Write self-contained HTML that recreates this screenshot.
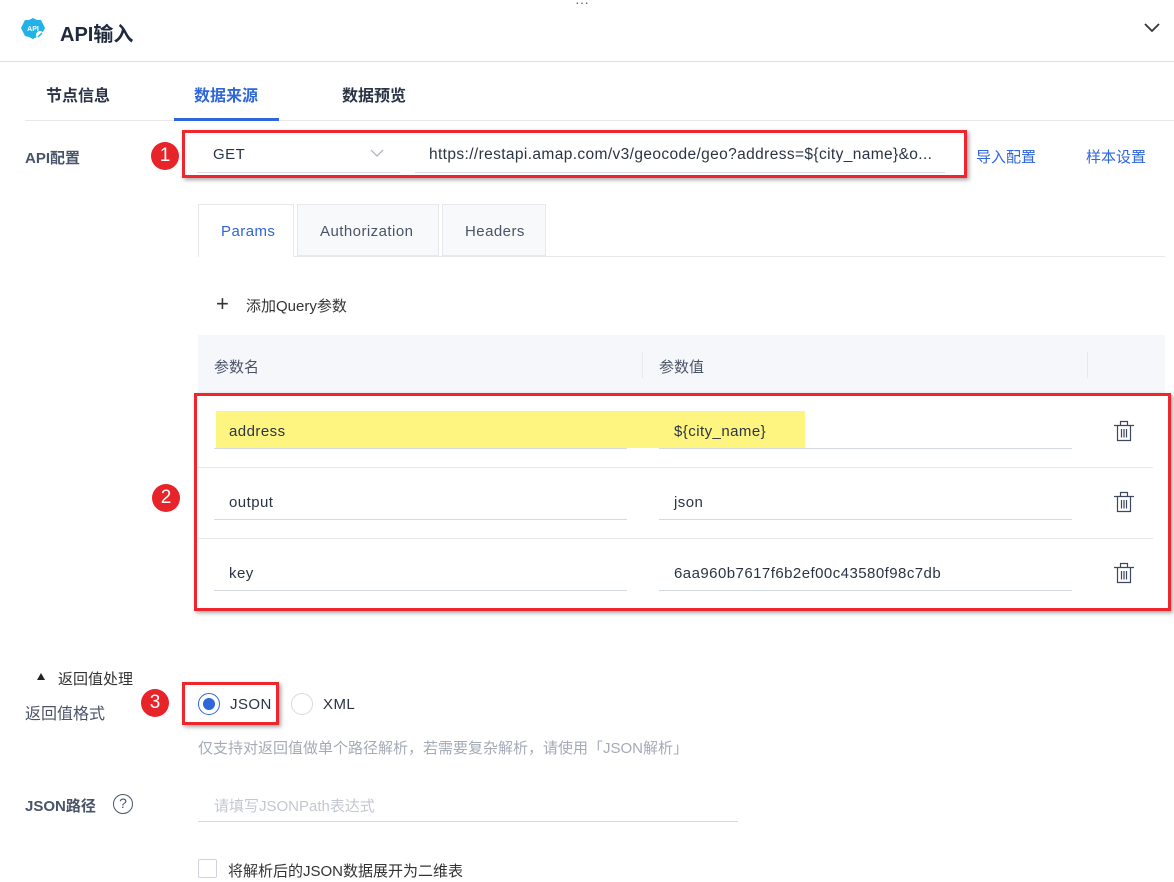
<!DOCTYPE html>
<html><head><meta charset="utf-8"><style>
*{box-sizing:border-box;margin:0;padding:0}
body{width:1174px;height:882px;background:#fff;font-family:"Liberation Sans","Noto Sans CJK SC",sans-serif;color:#2b3445;position:relative;overflow:hidden;font-size:14px}
.a{position:absolute;white-space:nowrap}
.badge{position:absolute;width:28px;height:28px;border-radius:50%;background:#e8242b;color:#fff;font-size:19px;text-align:center;line-height:28px}
.red{position:absolute;border:3px solid #f0262e;box-shadow:2px 2px 4px rgba(0,0,0,.35)}
.ul{position:absolute;border-bottom:1px solid #d5d9e0}
.lbl{font-weight:bold;color:#4a5468;font-size:15px}
.blue{color:#2f66d9}
.trash{position:absolute;width:22px;height:22px}
.ls{letter-spacing:.45px}
</style></head><body>
<div class="a" style="left:575px;top:-6px;color:#666;font-size:14px">···</div>
<svg class="a" style="left:21px;top:17px" width="25" height="24" viewBox="0 0 25 24"><path d="M12 1l4 2 4 0 2 4 2 4-2 4-2 4-4 1-4 2-4-2-4-1-2-4-2-4 2-4 2-4 4 0z" fill="#22b1e8"/><text x="12" y="14" font-size="7" font-weight="bold" fill="#fff" text-anchor="middle" font-family="Liberation Sans">API</text><circle cx="19" cy="18" r="4" fill="#fff"/><path d="M17 20l4-4" stroke="#22b1e8" stroke-width="1.5"/></svg>
<div class="a" style="left:60px;top:18px;font-size:20px;font-weight:bold;color:#1f2a3c">API输入</div>
<svg class="a" style="left:1144px;top:22px" width="16" height="12"><path d="M1 2l7 7 7-7" stroke="#333" stroke-width="1.8" fill="none"/></svg>
<div class="a" style="left:0;top:61px;width:1174px;border-top:1px solid #dcdfe4"></div>
<div class="a" style="left:46px;top:82px;font-size:16px;font-weight:bold;color:#2b3445">节点信息</div>
<div class="a blue" style="left:194px;top:82px;font-size:16px;font-weight:bold">数据来源</div>
<div class="a" style="left:342px;top:82px;font-size:16px;font-weight:bold;color:#2b3445">数据预览</div>
<div class="a" style="left:25px;top:120px;width:1149px;border-top:1px solid #e6e8ec"></div>
<div class="a" style="left:174px;top:118px;width:105px;height:3px;background:#2f66d9"></div>
<div class="a lbl" style="left:25px;top:147px">API配置</div>
<div class="badge" style="left:151px;top:142px">1</div>
<div class="red" style="left:182px;top:130px;width:785px;height:48px"></div>
<div class="ul" style="left:197px;top:140px;width:203px;height:33px"></div>
<div class="a ls" style="left:213px;top:146px;font-size:15px">GET</div>
<svg class="a" style="left:370px;top:149px" width="14" height="9"><path d="M1 1l6 6 6-6" stroke="#aab0bb" stroke-width="1.2" fill="none"/></svg>
<div class="ul" style="left:415px;top:140px;width:530px;height:33px"></div>
<div class="a" style="left:429px;top:146px;font-size:15.5px;letter-spacing:.38px">https://restapi.amap.com/v3/geocode/geo?address=${city_name}&amp;o...</div>
<div class="a blue" style="left:976px;top:146px;font-size:15px">导入配置</div>
<div class="a blue" style="left:1086px;top:146px;font-size:15px">样本设置</div>
<div class="a" style="left:198px;top:256px;width:967px;border-top:1px solid #e6e8ec"></div>
<div class="a" style="left:198px;top:204px;width:96px;height:53px;border:1px solid #e6e8ec;border-bottom:none;background:#fff"></div>
<div class="a" style="left:297px;top:204px;width:142px;height:52px;border:1px solid #e6e8ec;background:#f8f9fa"></div>
<div class="a" style="left:442px;top:204px;width:104px;height:52px;border:1px solid #e6e8ec;background:#f8f9fa"></div>
<div class="a blue ls" style="left:221px;top:223px;font-size:15px">Params</div>
<div class="a ls" style="left:320px;top:223px;font-size:15px;color:#4a5468">Authorization</div>
<div class="a ls" style="left:465px;top:223px;font-size:15px;color:#4a5468">Headers</div>
<div class="a" style="left:216px;top:291px;font-size:22px;font-weight:300;color:#333">+</div>
<div class="a" style="left:246px;top:295px;font-size:15px;color:#333">添加Query参数</div>
<div class="a" style="left:198px;top:335px;width:967px;height:60px;background:#f6f7fa"></div>
<div class="a" style="left:642px;top:352px;height:26px;border-left:1px solid #e6e8ec"></div>
<div class="a" style="left:1087px;top:352px;height:26px;border-left:1px solid #e6e8ec"></div>
<div class="a" style="left:214px;top:356px;font-size:15px;color:#4a5468">参数名</div>
<div class="a" style="left:659px;top:356px;font-size:15px;color:#4a5468">参数值</div>
<div class="red" style="left:194px;top:393px;width:977px;height:218px"></div>
<div class="a" style="left:198px;top:467px;width:955px;border-top:1px solid #e6e8ec"></div>
<div class="a" style="left:198px;top:538px;width:955px;border-top:1px solid #e6e8ec"></div>
<div class="a" style="left:216px;top:411px;width:589px;height:37px;background:#fdf57f"></div>
<div class="ul" style="left:214px;top:411px;width:413px;height:38px"></div>
<div class="ul" style="left:659px;top:411px;width:413px;height:38px"></div>
<div class="ul" style="left:214px;top:482px;width:413px;height:38px"></div>
<div class="ul" style="left:659px;top:482px;width:413px;height:38px"></div>
<div class="ul" style="left:214px;top:553px;width:413px;height:38px"></div>
<div class="ul" style="left:659px;top:553px;width:413px;height:38px"></div>
<div class="a ls" style="left:229px;top:423px;font-size:15px">address</div>
<div class="a ls" style="left:674px;top:423px;font-size:15px">${city_name}</div>
<div class="a ls" style="left:229px;top:494px;font-size:15px">output</div>
<div class="a ls" style="left:674px;top:494px;font-size:15px">json</div>
<div class="a ls" style="left:229px;top:565px;font-size:15px">key</div>
<div class="a ls" style="left:674px;top:565px;font-size:15px">6aa960b7617f6b2ef00c43580f98c7db</div>
<svg class="trash" style="left:1113px;top:420px" viewBox="0 0 22 22"><path d="M1 5.5h20M7.5 5V1.5h7V5M4.5 5.5v15h13v-15M8.5 9v8.5M11 9v8.5M13.5 9v8.5" stroke="#3d4760" stroke-width="1.2" fill="none"/></svg>
<svg class="trash" style="left:1113px;top:491px" viewBox="0 0 22 22"><path d="M1 5.5h20M7.5 5V1.5h7V5M4.5 5.5v15h13v-15M8.5 9v8.5M11 9v8.5M13.5 9v8.5" stroke="#3d4760" stroke-width="1.2" fill="none"/></svg>
<svg class="trash" style="left:1113px;top:562px" viewBox="0 0 22 22"><path d="M1 5.5h20M7.5 5V1.5h7V5M4.5 5.5v15h13v-15M8.5 9v8.5M11 9v8.5M13.5 9v8.5" stroke="#3d4760" stroke-width="1.2" fill="none"/></svg>
<div class="badge" style="left:152px;top:484px">2</div>
<svg class="a" style="left:37px;top:673px" width="10" height="8"><path d="M0 7L8 7 4 0z" fill="#222"/></svg>
<div class="a" style="left:58px;top:668px;font-size:15px;color:#333">返回值处理</div>
<div class="a" style="left:25px;top:700px;font-size:16px;color:#4a5468">返回值格式</div>
<div class="badge" style="left:141px;top:689px">3</div>
<div class="red" style="left:182px;top:682px;width:97px;height:43px"></div>
<div class="a" style="left:198px;top:693px;width:22px;height:22px;border-radius:50%;border:1px solid #2f66d9"></div>
<div class="a" style="left:203px;top:698px;width:12px;height:12px;border-radius:50%;background:#2f66d9"></div>
<div class="a ls" style="left:230px;top:696px;font-size:15px">JSON</div>
<div class="a" style="left:291px;top:693px;width:22px;height:22px;border-radius:50%;border:1px solid #d5d9e0"></div>
<div class="a ls" style="left:323px;top:696px;font-size:15px">XML</div>
<div class="a" style="left:198px;top:737px;font-size:15px;color:#a4abb6">仅支持对返回值做单个路径解析，若需要复杂解析，请使用「JSON解析」</div>
<div class="a lbl" style="left:25px;top:795px">JSON路径</div>
<div class="a" style="left:113px;top:794px;width:20px;height:20px;border-radius:50%;border:1.5px solid #4a5468;text-align:center;font-size:14px;line-height:17px;color:#4a5468">?</div>
<div class="ul" style="left:198px;top:786px;width:540px;height:36px"></div>
<div class="a" style="left:214px;top:795px;font-size:15px;color:#c3c8d0">请填写JSONPath表达式</div>
<div class="a" style="left:198px;top:859px;width:19px;height:19px;border:1px solid #cfd3da;border-radius:2px"></div>
<div class="a" style="left:228px;top:860px;font-size:15px;color:#333">将解析后的JSON数据展开为二维表</div>
</body></html>
